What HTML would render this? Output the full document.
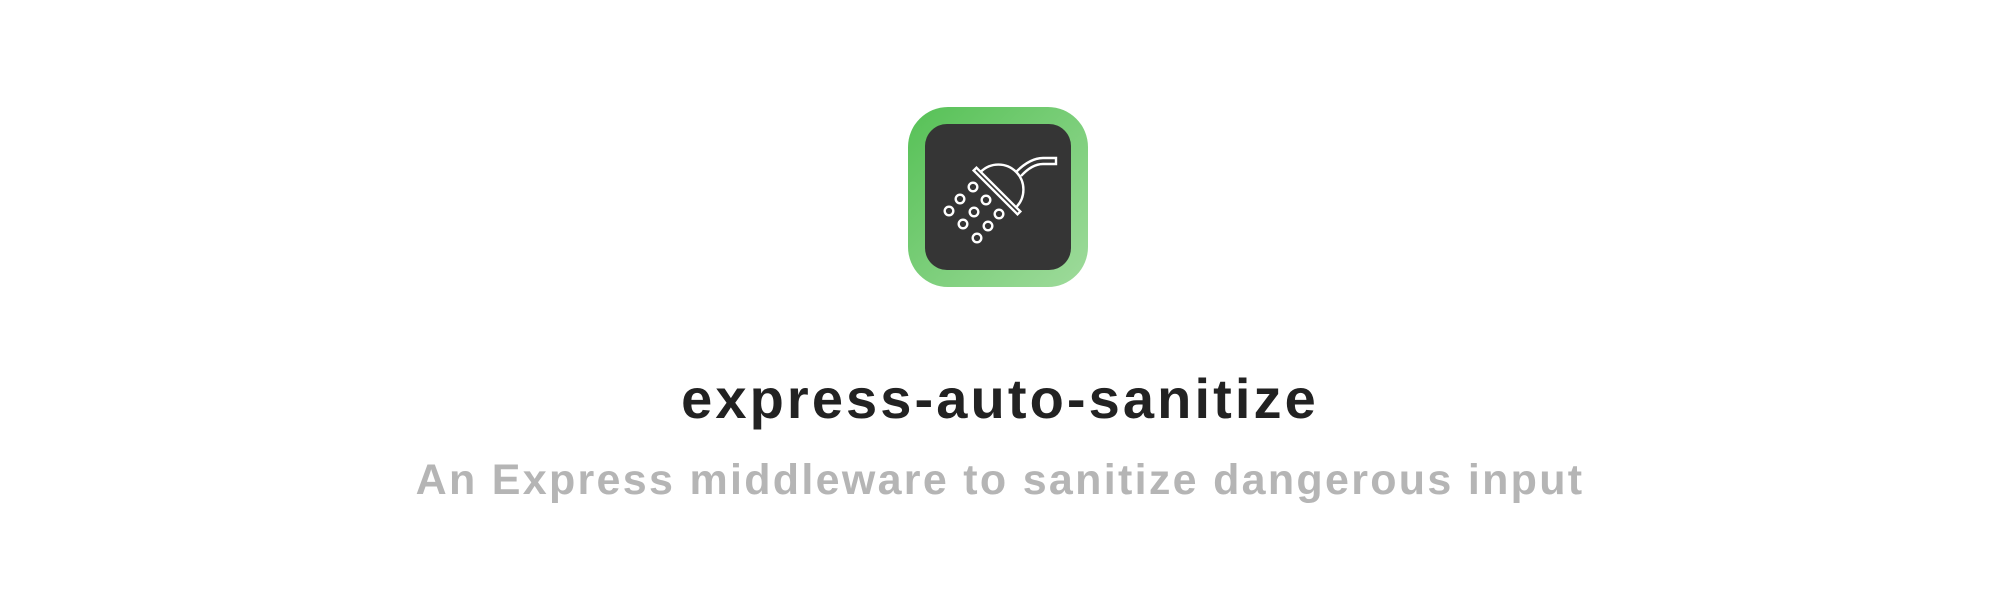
<!DOCTYPE html>
<html><head><style>
html,body{margin:0;padding:0;background:#fff;width:2000px;height:600px;overflow:hidden}
.icon{position:absolute;left:908px;top:107px;width:180px;height:180px;border-radius:40px;background:linear-gradient(135deg,#56c156,#9fdb9c)}
.inner{position:absolute;left:17px;top:17px;width:146px;height:146px;border-radius:22px;background:#353535}
.t{position:absolute;left:0;width:2000px;text-align:center;font-family:"Liberation Sans",sans-serif;white-space:nowrap;font-weight:bold}
.t1{top:366px;font-size:56px;color:#222;letter-spacing:3.1px}
.t2{top:456px;font-size:43px;color:#b5b5b5;letter-spacing:2.3px}
svg{position:absolute;left:0;top:0}
</style></head><body>
<div class="icon"><div class="inner"></div></div>
<svg width="2000" height="600" fill="none" stroke="#fff" stroke-width="2.4">
<g transform="rotate(45 997 191)">
<rect x="966" y="189" width="62" height="4"/>
<path d="M972 189 A25 25 0 0 1 1022 189"/>
</g>
<path d="M1016 172 Q1030 158 1043 158 L1056 158 L1056 164 L1043 164 Q1032 164 1021 176"/>
<g>
<circle cx="973" cy="187" r="4.3"/><circle cx="960" cy="199" r="4.3"/><circle cx="986" cy="200" r="4.3"/>
<circle cx="949" cy="211" r="4.3"/><circle cx="974" cy="212" r="4.3"/><circle cx="999" cy="214" r="4.3"/>
<circle cx="963" cy="224" r="4.3"/><circle cx="988" cy="226" r="4.3"/><circle cx="977" cy="238" r="4.3"/>
</g>
</svg>
<div class="t t1">express-auto-sanitize</div>
<div class="t t2">An Express middleware to sanitize dangerous input</div>
</body></html>
